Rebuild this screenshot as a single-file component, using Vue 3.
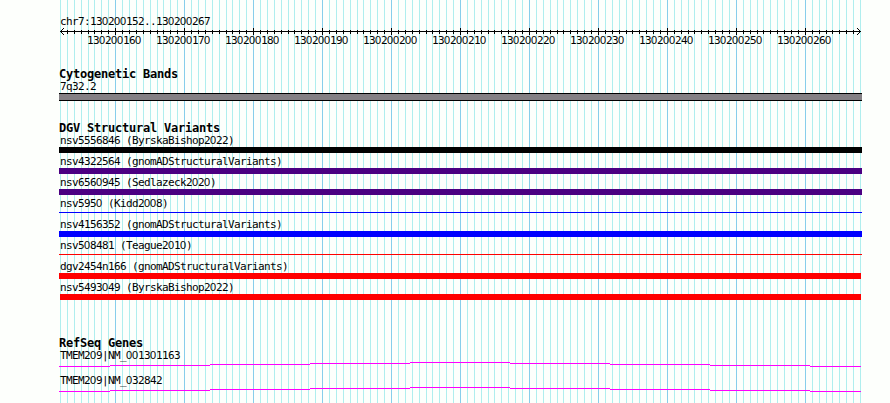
<script setup>
import { h } from 'vue'

const grid = Array.from({ length: 117 }, (_, i) => ({
  x: Math.floor(60.5 + (i * 800) / 116),
  major: i % 10 === 8,
  pos: 130200152 + i,
}))
const majors = grid.filter((g) => g.major)
const ticks = grid.slice(1, -1)

// Label text on a fixed 6px cell, with an undotted zero.
const Label = (props) =>
  h('span', { class: 'label' },
    props.text.split(/(0)/).filter(Boolean).map((s) => (s === '0' ? h('span', { class: 'zero' }, s) : s)))
Label.props = ['text']

const variants = [
  { name: 'nsv5556846 (ByrskaBishop2022)', kind: 'black' },
  { name: 'nsv4322564 (gnomADStructuralVariants)', kind: 'indigo' },
  { name: 'nsv6560945 (Sedlazeck2020)', kind: 'indigo' },
  { name: 'nsv5950 (Kidd2008)', kind: 'blue thin' },
  { name: 'nsv4156352 (gnomADStructuralVariants)', kind: 'blue' },
  { name: 'nsv508481 (Teague2010)', kind: 'red thin' },
  { name: 'dgv2454n166 (gnomADStructuralVariants)', kind: 'red short' },
  { name: 'nsv5493049 (ByrskaBishop2022)', kind: 'red inset' },
]
const genes = ['TMEM209|NM_001301163', 'TMEM209|NM_032842']
const segments = [
  [0, 51, 4], [51, 100, 3], [151, 100, 2], [251, 100, 1], [351, 100, 0],
  [451, 100, 1], [551, 100, 2], [651, 100, 3], [751, 51, 4],
]
</script>

<template>
  <div class="browser">
    <svg class="grid" width="890" height="403" shape-rendering="crispEdges">
      <rect v-for="g in grid" :key="g.pos" :x="g.x" y="0" width="1" height="403" :class="g.major ? 'major' : 'minor'" />
    </svg>
    <main class="tracks">
      <div class="region"><Label text="chr7:130200152..130200267" /></div>
      <svg class="axis" width="890" height="7" shape-rendering="crispEdges">
        <rect x="60" y="3" width="801" height="1" />
        <rect v-for="t in ticks" :key="t.pos" :x="t.x" :y="t.major ? 0 : 2" width="1" :height="t.major ? 7 : 4" />
        <path d="M61 2h1v1h-1zM62 1h1v1h-1zM63 0h1v1h-1zM61 4h1v1h-1zM62 5h1v1h-1zM63 6h1v1h-1z" />
        <path d="M859 2h1v1h-1zM858 1h1v1h-1zM857 0h1v1h-1zM859 4h1v1h-1zM858 5h1v1h-1zM857 6h1v1h-1z" />
      </svg>
      <div class="positions">
        <Label v-for="m in majors" :key="m.pos" :text="String(m.pos)" />
      </div>
      <section class="cyto">
        <h2>Cytogenetic Bands</h2>
        <div class="name"><Label text="7q32.2" /></div>
        <div class="band"></div>
      </section>
      <section class="variants">
        <h2>DGV Structural Variants</h2>
        <div v-for="v in variants" :key="v.name" class="variant">
          <div class="name"><Label :text="v.name" /></div>
          <div class="bar" :class="v.kind"></div>
        </div>
      </section>
      <section class="genes">
        <h2>RefSeq Genes</h2>
        <div v-for="g in genes" :key="g" class="gene">
          <div class="name"><Label :text="g" /></div>
          <svg width="802" height="5" shape-rendering="crispEdges">
            <rect v-for="s in segments" :key="s[0]" :x="s[0]" :y="s[2]" :width="s[1]" height="1" />
          </svg>
        </div>
      </section>
    </main>
  </div>
</template>

<style>
body { background: #fdfffc; }
</style>

<style scoped>
.browser { position: relative; width: 890px; height: 403px; overflow: hidden; color: #000; }
.grid { position: absolute; left: 0; top: 0; }
.minor { fill: #afeeee; }
.major { fill: #87ceeb; }
.tracks { position: relative; display: flex; flex-direction: column; padding-top: 16px; }
svg { display: block; }
:deep(.label) {
  display: block; height: 12px; white-space: pre;
  font: 11px/12px "DejaVu Sans Mono", monospace; letter-spacing: -0.622px;
}
:deep(.zero) {
  font: 11px/0 "Liberation Sans", sans-serif; letter-spacing: -0.118px;
}
.region { height: 12px; padding-left: 60px; }
.positions { display: flex; height: 12px; padding-left: 87px; }
.positions :deep(.label) { flex: 0 0 69px; }
h2 { margin: 0; height: 13px; white-space: pre; font: bold 12px/12px "DejaVu Sans Mono", monospace; letter-spacing: -0.224px; }
section { padding-left: 59px; }
.name { height: 12px; padding-left: 1px; }
.cyto { padding-top: 21px; }
.band { box-sizing: border-box; width: 803px; height: 8px; background: #848084; border: solid #000; border-width: 1px 0; }
.variants { padding-top: 21px; }
.variant { display: flow-root; height: 21px; }
.bar { width: 803px; height: 6px; }
.black { background: #000; }
.indigo { background: #4b0082; }
.blue { background: #00f; }
.red { background: #f00; }
.thin { height: 1px; margin-top: 2px; }
.short { width: 802px; }
.inset { width: 801px; margin-left: 1px; }
.genes { padding-top: 34px; }
.gene { height: 25px; }
.gene rect { fill: #f0f; }
</style>
